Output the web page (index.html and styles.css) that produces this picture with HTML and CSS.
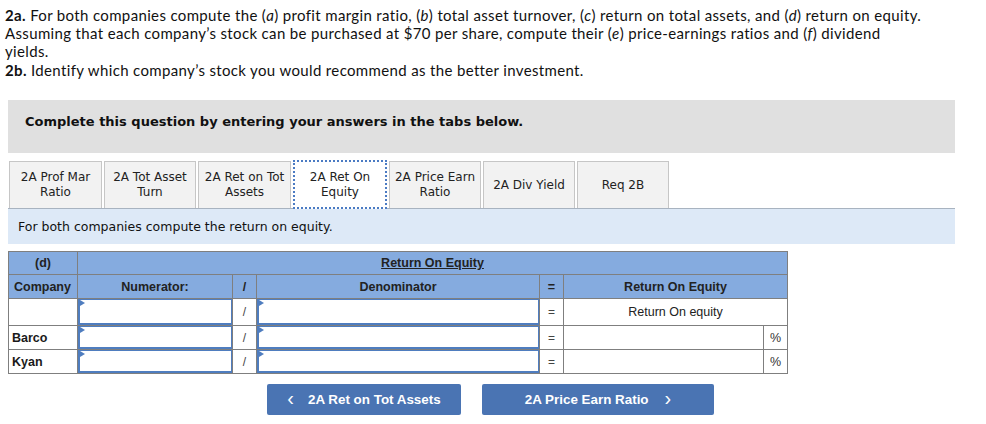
FILE: index.html
```html
<!DOCTYPE html>
<html>
	<head>
		<meta charset="UTF-8">
		<title>Return On Equity</title>
		<link rel="stylesheet" href="styles.css">
	</head>
	<body>
		<div class="intro">
			<p><b>2a.</b> For both companies compute the (<i>a</i>) profit margin ratio, (<i>b</i>) total asset turnover, (<i>c</i>) return on total assets, and (<i>d</i>) return on equity.<br>Assuming that each company’s stock can be purchased at $70 per share, compute their (<i>e</i>) price-earnings ratios and (<i>f</i>) dividend<br>yields.</p>
			<p><b>2b.</b> Identify which company’s stock you would recommend as the better investment.</p>
		</div>
		<div class="box">
			<div class="boxTitle">Complete this question by entering your answers in the tabs below.</div>
		</div>
		<ul class="tabs">
			<li class="w93">2A Prof Mar<br>Ratio</li>
			<li class="w92">2A Tot Asset<br>Turn</li>
			<li class="w93">2A Ret on Tot<br>Assets</li>
			<li class="w94 active">2A Ret On<br>Equity</li>
			<li class="w92">2A Price Earn<br>Ratio</li>
			<li class="w92">2A Div Yield</li>
			<li class="w92">Req 2B</li>
		</ul>
		<div class="hint">For both companies compute the return on equity.</div>
		<table id="tb" cellpadding="0" cellspacing="0">
			<tr class="h1">
				<th class="c1">(d)</th>
				<th colspan="6"><u>Return On Equity</u></th>
			</tr>
			<tr class="h2">
				<th>Company</th>
				<th class="c2">Numerator:</th>
				<th class="c3">/</th>
				<th class="c4">Denominator</th>
				<th class="c5">=</th>
				<th colspan="2">Return On Equity</th>
			</tr>
			<tr class="r1">
				<td></td>
				<td class="ipt"><div class="box2"></div></td>
				<td class="op">/</td>
				<td class="ipt"><div class="box2"></div></td>
				<td class="op">=</td>
				<td colspan="2" class="res">Return On equity</td>
			</tr>
			<tr class="r2">
				<td class="name">Barco</td>
				<td class="ipt"><div class="box2"></div></td>
				<td class="op">/</td>
				<td class="ipt"><div class="box2"></div></td>
				<td class="op">=</td>
				<td class="c6"></td>
				<td class="pct">%</td>
			</tr>
			<tr class="r2">
				<td class="name">Kyan</td>
				<td class="ipt"><div class="box2"></div></td>
				<td class="op">/</td>
				<td class="ipt"><div class="box2"></div></td>
				<td class="op">=</td>
				<td class="c6"></td>
				<td class="pct">%</td>
			</tr>
		</table>
		<div class="nav">
			<a href="#" class="btn prev"><span class="arr">&lsaquo;</span>2A Ret on Tot Assets</a>
			<a href="#" class="btn next">2A Price Earn Ratio<span class="arr">&rsaquo;</span></a>
		</div>
	</body>
</html>
```
FILE: styles.css
```css
*{
	margin: 0;
	padding: 0;
	list-style: none;
	box-sizing: border-box;
}
body{
	font-family: "Liberation Sans", Arial, sans-serif;
	color: #1a1a1a;
	background: #fff;
}
.intro{
	padding: 6px 0 0 5px;
	white-space: nowrap;
	font-family: Lato, "Open Sans", sans-serif;
	font-size: 15px;
	letter-spacing: 0.35px;
	line-height: 18px;
	color: #111;
}
.intro p{
	margin: 0 0 1px 0;
}
.box{
	margin: 21px 0 0 8px;
	width: 947px;
	height: 53px;
	background-color: #e0e0e0;
	padding: 14px 0 0 17px;
}
.boxTitle{
	font-family: "DejaVu Sans", Verdana, sans-serif;
	font-weight: bold;
	font-size: 13px;
	color: #111;
}
.tabs{
	display: flex;
	gap: 2px;
	margin: 8px 0 0 9px;
	height: 47px;
}
.tabs li{
	height: 47px;
	background-color: #f2f2f2;
	border: 1px solid #c6c6c6;
	border-bottom: 0;
	font-family: "DejaVu Sans", Verdana, sans-serif;
	font-size: 12px;
	line-height: 15px;
	color: #222;
	text-align: center;
	display: flex;
	align-items: center;
	justify-content: center;
}
.tabs .w92{ width: 92px; }
.tabs .w93{ width: 93px; }
.tabs .w94{ width: 94px; }
.tabs li.active{
	background-color: #fff;
	border: 2px dotted #4b7bc3;
	height: 49px;
	position: relative;
	z-index: 1;
	margin-top: -1px;
}
.hint{
	margin-left: 8px;
	width: 947px;
	height: 36px;
	background-color: #dde9f7;
	border-top: 1px solid #a8b3c0;
	padding-left: 10px;
	line-height: 36px;
	font-family: "DejaVu Sans", Verdana, sans-serif;
	font-size: 12.5px;
	color: #111;
}
#tb{
	margin: 7px 0 0 8px;
	width: 780px;
	border-collapse: collapse;
	font-size: 12.5px;
}
#tb th, #tb td{
	border: 1px solid #7f7f7f;
	padding: 0;
}
#tb th{
	background-color: #85abdf;
	font-weight: bold;
	color: #222;
	text-align: center;
}
#tb .h1{ height: 23px; }
#tb .h2{ height: 24px; }
#tb .r1{ height: 27px; }
#tb .r2{ height: 24px; }
#tb .c1{ width: 69px; }
#tb .c2{ width: 155px; }
#tb .c3{ width: 24px; }
#tb .c4{ width: 283px; }
#tb .c5{ width: 24px; }
#tb .h2 th:first-child{
	text-align: left;
	padding-left: 5px;
}
#tb .name{
	font-weight: bold;
	padding-left: 3px;
}
#tb .op{
	text-align: center;
	color: #444;
	font-size: 12px;
}
#tb .res{
	text-align: center;
	font-size: 12.5px;
	color: #222;
}
#tb .pct{
	width: 24px;
	text-align: center;
	color: #333;
}
#tb .ipt{
	vertical-align: top;
	position: relative;
}
#tb .box2{
	border: 1px solid #4f7dbf;
	border-left-width: 2px;
	border-bottom-width: 2px;
	background: #fff;
}
#tb .r1 .box2{ height: 26px; }
#tb .r2 .box2{ height: 23px; }
#tb .ipt::before{
	content: "";
	position: absolute;
	left: 2px;
	top: 1px;
	border-left: 5px solid #4f7dbf;
	border-top: 3px solid transparent;
	border-bottom: 3px solid transparent;
}
.nav{
	display: flex;
	justify-content: center;
	gap: 21px;
	margin: 10px 0 0 8px;
	width: 965px;
}
.btn{
	height: 31px;
	background-color: #4a74b3;
	border-radius: 2px;
	color: #fff;
	font-weight: bold;
	font-size: 13.4px;
	text-decoration: none;
	display: flex;
	align-items: center;
	justify-content: center;
}
.prev{ width: 194px; }
.next{ width: 232px; }
.arr{
	font-size: 20px;
	font-weight: normal;
	line-height: 20px;
	margin-top: -3px;
}
.prev .arr{ margin-right: 14px; }
.next .arr{ margin-left: 16px; }
```
